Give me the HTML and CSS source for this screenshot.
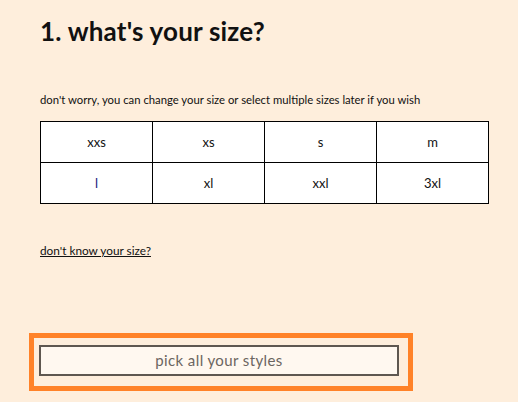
FILE: index.html
```html
<!DOCTYPE html>
<html>
<head>
<meta charset="utf-8">
<link rel="stylesheet" href="styles.css">
</head>
<body>
<main class="page">
  <h1 class="title">1. what's your size?</h1>
  <p class="note">don't worry, you can change your size or select multiple sizes later if you wish</p>
  <div class="sizes">
    <div class="cell">xxs</div>
    <div class="cell">xs</div>
    <div class="cell">s</div>
    <div class="cell">m</div>
    <div class="cell dark">l</div>
    <div class="cell">xl</div>
    <div class="cell">xxl</div>
    <div class="cell">3xl</div>
  </div>
  <a class="help" href="#">don't know your size?</a>
  <div class="focus">
    <button class="cta">pick all your styles</button>
  </div>
</main>
</body>
</html>
```

FILE: styles.css
```css
html, body {
  margin: 0;
  padding: 0;
  background: #feeedc;
}
.page {
  width: 518px;
  height: 402px;
  box-sizing: border-box;
  padding: 15px 0 0 40px;
  display: flex;
  flex-direction: column;
  align-items: flex-start;
  font-family: "Lato", "Noto Sans", sans-serif;
  color: #111;
}
.title {
  margin: 0;
  font-size: 26px;
  line-height: 32px;
  font-weight: 700;
  letter-spacing: 0.2px;
}
.note {
  margin: 46px 0 0 0;
  font-size: 11.3px;
  line-height: 14px;
}
.sizes {
  margin-top: 14px;
  display: grid;
  grid-template-columns: repeat(4, 112px);
  grid-auto-rows: 41px;
  border-left: 1px solid #000;
  border-top: 1px solid #000;
  background: #fff;
}
.cell {
  border-right: 1px solid #000;
  border-bottom: 1px solid #000;
  display: flex;
  align-items: center;
  justify-content: center;
  font-size: 13px;
}
.dark { color: #16207a; }
.help {
  margin-top: 40px;
  font-size: 11.8px;
  line-height: 14px;
  color: #111;
  text-decoration: underline;
}
.focus {
  margin-top: 75px;
  margin-left: -11px;
  border: 5px solid #ff8228;
  padding: 7px 9px 10px 5px;
}
.cta {
  width: 360px;
  height: 31px;
  padding-bottom: 3px;
  border: 2px solid #5e5750;
  background: #fff8f0;
  font-family: "Lato", "Noto Sans", sans-serif;
  font-size: 15px;
  letter-spacing: 0.4px;
  color: #6b6560;
  display: block;
}
```
